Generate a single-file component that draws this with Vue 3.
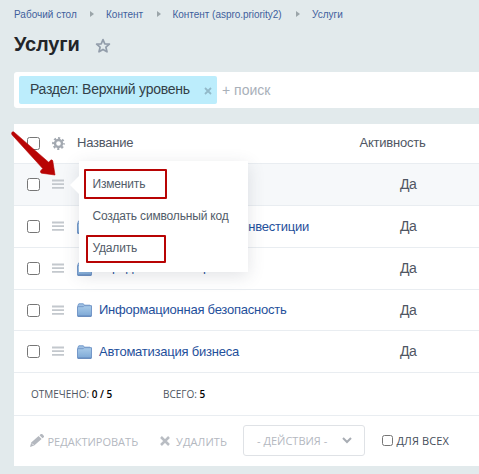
<script setup>
const crumbs = ['Рабочий стол', 'Контент', 'Контент (aspro.priority2)', 'Услуги']
const rows = [
  { id: 1, name: '', active: 'Да' },
  { id: 2, name: 'инвестиции', active: 'Да' },
  { id: 3, name: 'Юридические споры', active: 'Да' },
  { id: 4, name: 'Информационная безопасность', active: 'Да' },
  { id: 5, name: 'Автоматизация бизнеса', active: 'Да' },
]
</script>

<template>
  <main class="page">
    <nav class="crumbs">
      <template v-for="(c, i) in crumbs" :key="c">
        <i v-if="i" class="sep"></i>
        <a :class="'c' + i">{{ c }}</a>
      </template>
    </nav>
    <header class="title">
      <h1>Услуги</h1>
      <svg width="16" height="16" viewBox="0 0 16 16"><path d="M8 1.6l1.8 4.2 4.6.4-3.5 3 1.1 4.6L8 11.4l-4 2.4 1.1-4.6-3.5-3 4.6-.4z" fill="none" stroke="#929daa" stroke-width="1.7" stroke-linejoin="round" /></svg>
    </header>
    <div class="search">
      <div class="chip"><span class="chip-text">Раздел: Верхний уровень</span>
        <svg width="8" height="8" viewBox="0 0 8 8"><path d="M1 1l6 6M7 1L1 7" stroke="#92b9c9" stroke-width="1.8" /></svg>
      </div>
      <span class="placeholder">+ поиск</span>
    </div>

    <section class="panel">
      <div class="row head">
        <span class="box"></span>
        <svg class="gear" width="13" height="13" viewBox="-6.5 -6.5 13 13">
          <circle r="3.5" fill="none" stroke="#a3a9b1" stroke-width="2.4" />
          <circle r="5.3" fill="none" stroke="#a3a9b1" stroke-width="2.2" stroke-dasharray="2.1 2.0626" stroke-dashoffset="1.05" />
        </svg>
        <span class="name-head">Название</span>
        <span class="active-head">Активность</span>
      </div>
      <div v-for="r in rows" :key="r.id" class="row" :class="'r' + r.id">
        <span class="box"></span>
        <svg class="burger" width="12" height="10" viewBox="0 0 12 10"><path d="M0 1.5h12M0 5.2h12M0 8.9h12" stroke="#c3c8cd" stroke-width="1.8" /></svg>
        <svg class="folder" width="15" height="14" viewBox="0 0 15 14">
          <defs><linearGradient id="fold" x1="0" y1="0" x2="0" y2="1"><stop offset="0" stop-color="#a9cbe9" /><stop offset="1" stop-color="#7da8d6" /></linearGradient></defs>
          <path d="M1 2.2L1.8.8h4.6l.9 1.4H13v3H1z" fill="#9fc0e3" stroke="#779dcd" />
          <path d="M.5 3.7h5.7l1-1h7.3v10.5H.5z" fill="url(#fold)" stroke="#7598c9" />
          <path d="M1 13.2h13" stroke="#597fb5" />
        </svg>
        <a class="name">{{ r.name }}</a>
        <span class="active">{{ r.active }}</span>
      </div>
      <div class="totals">
        <span class="t1">ОТМЕЧЕНО: <b>0 / 5</b></span>
        <span class="t2">ВСЕГО: <b>5</b></span>
      </div>
      <footer class="actions">
        <svg class="pencil" width="14" height="13" viewBox="0 0 14 13"><path d="M0 13l1.2-4.4L8.6 2l3 3.1-7.4 6.5zM9.5 1.2L10.9 0h1.2L14 1.9v1.2l-1.5 1.2z" fill="#b4b8bf" /><path d="M2 9.5l1.7 1.7" stroke="#fff" stroke-width=".8" /></svg>
        <span class="edit">РЕДАКТИРОВАТЬ</span>
        <svg class="cross" width="10" height="10" viewBox="0 0 10 10"><path d="M1 1l8 8M9 1L1 9" stroke="#b9bdc3" stroke-width="2.5" /></svg>
        <span class="del">УДАЛИТЬ</span>
        <div class="select"><span>- ДЕЙСТВИЯ -</span>
          <svg width="10" height="7" viewBox="0 0 10 7"><path d="M1 1l4 4 4-4" fill="none" stroke="#a8adb4" stroke-width="2" /></svg>
        </div>
        <span class="box small"></span>
        <span class="all">ДЛЯ ВСЕХ</span>
      </footer>
    </section>

    <div class="menu">
      <i class="tip"></i>
      <span class="m1">Изменить</span>
      <span class="m2">Создать символьный код</span>
      <span class="m3">Удалить</span>
    </div>
    <i class="mark first"></i>
    <i class="mark second"></i>
    <svg class="arrow" width="50" height="50" viewBox="0 0 50 50"><path d="M.7 2Q1 .4 2.8.9L37.6 31.2l2-2q1.8-1 2.2.9L44 44 30.6 42.2q-2-.8-.9-2.4l2-2.3L1.2 4Q.4 3 .7 2z" fill="#b80404" stroke="#b80404" stroke-width=".6" stroke-linejoin="round" /></svg>
  </main>
</template>

<style>
body { background: #e2eaec; }
</style>

<style scoped>
* { box-sizing: border-box; }
.page { position: relative; width: 479px; height: 474px; overflow: hidden; padding-left: 14px; font-family: "Liberation Sans", Arial, sans-serif; background: #e2eaec; white-space: nowrap; }
.crumbs { display: flex; height: 28px; align-items: center; font-size: 10px; color: #3f5f9c; }
.crumbs a { flex: none; }
.c0 { width: 62px; }
.c1 { width: 36.5px; }
.c2 { width: 109.5px; letter-spacing: -.03px; }
.sep { flex: none; width: 0; height: 0; margin: 0 12px 0 14px; border-left: 4px solid #9ba5a9; border-top: 3px solid transparent; border-bottom: 3px solid transparent; }
.title { display: flex; height: 44px; padding-top: 4px; }
.title h1 { width: 81px; margin: 0; font-size: 20px; line-height: 24px; letter-spacing: -.15px; color: #222529; }
.title svg { margin-top: 6px; }
.search { display: flex; align-items: center; height: 36px; padding-left: 5px; background: #fff; border-radius: 3px 0 0 3px; }
.chip { display: flex; align-items: center; width: 198px; height: 28px; padding-left: 11px; background: #bcedfc; border-radius: 2px; font-size: 14px; color: #333f48; }
.chip-text { width: 174px; margin-top: -2px; letter-spacing: -.25px; }
.chip svg { margin-top: 1px; }
.placeholder { margin-left: 5px; font-size: 14px; color: #a9b0b9; }
.panel { margin-top: 16px; height: 342px; background: #fff; }
.row { display: flex; align-items: center; height: 42px; padding-left: 13px; border-bottom: 1px solid #e9edf1; font-size: 13px; letter-spacing: -.23px; color: #4f5663; }
.head { height: 40px; }
.r1 { background: #f6f8fa; }
.r4 { height: 41px; }
.box { flex: none; width: 13px; height: 13px; border: 1px solid #767676; border-radius: 2.5px; background: #fff; }
.gear { flex: none; margin: -1px 12.5px 0 11.5px; }
.burger { flex: none; margin: -1px 13px 0 12px; }
.folder { flex: none; margin-right: 7px; }
.name-head { width: 282.5px; }
.name-head, .active-head { margin-top: -3px; }
.name { flex: none; width: 246px; margin-top: -1px; color: #1f509b; }
.r2 .name { padding-right: 36px; text-align: right; }
.r3 .name { margin-top: -5px; }
.active { width: 60px; margin: -1px 0 0 55px; font-size: 14px; letter-spacing: -.4px; }
.totals { display: flex; height: 43px; align-items: center; padding-left: 17px; border-bottom: 1px solid #e9edf1; font: 10px "Open Sans", sans-serif; color: #4d5561; }
.totals b { color: #000; font-weight: 600; }
.t1 { width: 132px; }
.actions { display: flex; align-items: center; height: 51px; padding-left: 16px; font: 11px "Open Sans", sans-serif; color: #b4b8bf; }
.pencil, .cross, .edit, .del, .select, .all { flex: none; }
.pencil { margin-top: -2px; }
.edit { width: 100px; margin-left: 3.5px; }
.cross { margin: -1px 0 0 12.5px; }
.del { width: 67px; margin-left: 6px; letter-spacing: .1px; }
.edit, .del { margin-top: -1px; }
.select { display: flex; align-items: center; width: 122px; height: 31px; margin-top: -2px; padding: 0 12px 0 13px; justify-content: space-between; border: 1px solid #dfe2e6; border-radius: 3px; }
.small { width: 11px; height: 11px; margin: -2px 0 0 16.5px; }
.all { margin: -3px 0 0 4px; letter-spacing: .1px; color: #454d5a; }
.menu { position: absolute; left: 79px; top: 161px; width: 169px; height: 111px; padding: 7px 13.5px; background: #fff; box-shadow: 0 4px 16px rgba(60, 70, 85, .15); font-size: 12px; letter-spacing: -.17px; color: #525c69; display: flex; flex-direction: column; }
.menu span { height: 32px; line-height: 32px; }
.tip { position: absolute; left: -9px; top: 15px; border: 9px solid transparent; border-left: 0; border-right-color: #fff; }
.mark { position: absolute; border: 2px solid #b80404; border-radius: 1px; }
.first { left: 84px; top: 169px; width: 83px; height: 30px; }
.second { left: 86px; top: 235px; width: 80px; height: 28px; }
.arrow { position: absolute; left: 11px; top: 131px; }
</style>
